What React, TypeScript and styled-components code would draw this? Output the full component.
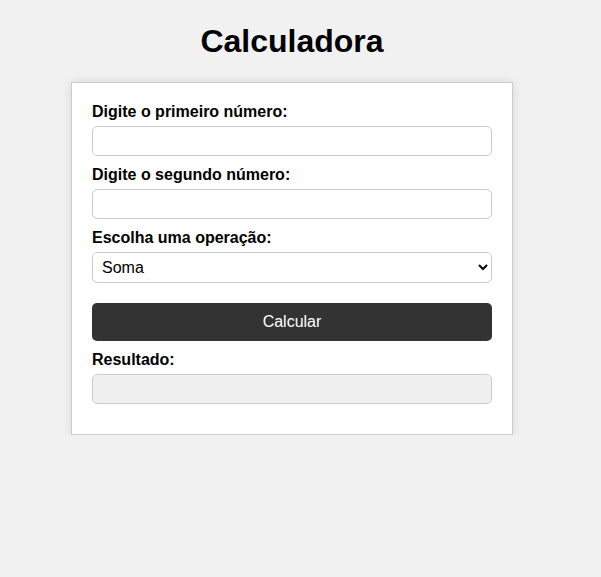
import React, { useState } from 'react';
import styled, { createGlobalStyle } from 'styled-components';

const GlobalStyle = createGlobalStyle`
  body {
    margin: 0;
    background: #f1f1f1;
    font-family: Arial, "Liberation Sans", sans-serif;
  }
`;

const App: React.FC = () => {
  const [a, setA] = useState('');
  const [b, setB] = useState('');
  const [op, setOp] = useState('soma');
  const [result, setResult] = useState('');

  const calcular = () => {
    const x = parseFloat(a);
    const y = parseFloat(b);
    if (isNaN(x) || isNaN(y)) {
      setResult('Entrada inválida');
      return;
    }
    switch (op) {
      case 'soma': setResult(String(x + y)); break;
      case 'subtracao': setResult(String(x - y)); break;
      case 'multiplicacao': setResult(String(x * y)); break;
      case 'divisao': setResult(y === 0 ? 'Divisão por zero' : String(x / y)); break;
    }
  };

  return (
    <Page>
      <GlobalStyle />
      <Title>Calculadora</Title>
      <Card>
        <Label htmlFor="n1">Digite o primeiro número:</Label>
        <Input id="n1" type="number" value={a} onChange={e => setA(e.target.value)} />
        <Label htmlFor="n2">Digite o segundo número:</Label>
        <Input id="n2" type="number" value={b} onChange={e => setB(e.target.value)} />
        <Label htmlFor="op">Escolha uma operação:</Label>
        <Select id="op" value={op} onChange={e => setOp(e.target.value)}>
          <option value="soma">Soma</option>
          <option value="subtracao">Subtração</option>
          <option value="multiplicacao">Multiplicação</option>
          <option value="divisao">Divisão</option>
        </Select>
        <Button onClick={calcular}>Calcular</Button>
        <Label htmlFor="res">Resultado:</Label>
        <Input id="res" type="text" value={result} readOnly $readOnly />
      </Card>
    </Page>
  );
};

const Page = styled.div`
  width: 584px;
  display: flex;
  flex-direction: column;
  align-items: center;
  padding-top: 21px;
`;

const Title = styled.h1`
  margin: 0 0 21px;
  font-size: 32px;
  font-weight: bold;
  color: #000;
  line-height: 40px;
`;

const Card = styled.div`
  width: 400px;
  padding: 20px;
  background: #fff;
  border: 1px solid #ccc;
  box-shadow: 0 0 10px rgba(0, 0, 0, 0.1);
  display: flex;
  flex-direction: column;
`;

const Label = styled.label`
  font-size: 16px;
  font-weight: bold;
  color: #000;
  line-height: 18px;
  margin-bottom: 5px;
`;

const Input = styled.input<{ $readOnly?: boolean }>`
  box-sizing: border-box;
  width: 100%;
  height: 30px;
  margin: 0 0 10px;
  padding: 0 8px;
  border: 1px solid #ccc;
  border-radius: 5px;
  font-size: 16px;
  font-family: inherit;
  background: ${p => (p.$readOnly ? '#f0f0f0' : '#fff')};
  outline: none;
`;

const Select = styled.select`
  box-sizing: border-box;
  width: 100%;
  height: 31px;
  margin: 0 0 10px;
  padding: 0 5px;
  border: 1px solid #ccc;
  border-radius: 5px;
  font-size: 16px;
  font-family: inherit;
  color: #000;
  background: #fff;
`;

const Button = styled.button`
  box-sizing: border-box;
  width: 100%;
  height: 38px;
  margin: 10px 0 10px;
  border: none;
  border-radius: 5px;
  background: #333;
  color: #fff;
  font-size: 16px;
  font-family: inherit;
  cursor: pointer;
`;

export default App;
